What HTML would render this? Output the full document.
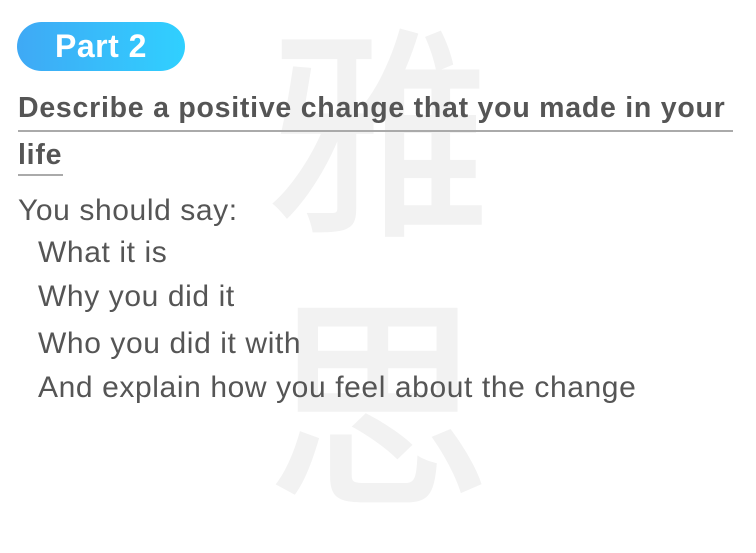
<!DOCTYPE html>
<html><head><meta charset="utf-8"><style>
html,body{margin:0;padding:0;background:#fff;}
body{width:756px;height:434px;position:relative;overflow:hidden;font-family:"Liberation Sans","Noto Sans CJK SC",sans-serif;color:#555;}
.wm{position:absolute;font-family:"Noto Sans CJK SC",sans-serif;color:#f2f2f2;font-size:225px;line-height:1;font-weight:500;}
.pill{position:absolute;left:17px;top:22px;width:168px;height:49px;border-radius:25px;background:linear-gradient(90deg,#3fa9f5,#30d0ff);color:#fff;font-weight:bold;font-size:32px;line-height:49px;text-align:center;letter-spacing:0.5px;}
.t{position:absolute;left:18px;font-weight:bold;font-size:28.5px;white-space:nowrap;letter-spacing:0.75px;}
.u{position:absolute;height:2px;background:#aaa;}
.l{position:absolute;font-size:30px;white-space:nowrap;line-height:1;letter-spacing:0.6px;}
</style></head><body>
<div class="wm" style="left:266px;top:8px;">雅</div>
<div class="wm" style="left:266px;top:278px;">思</div>
<div class="pill">Part 2</div>
<div class="t" style="top:92px;">Describe a positive change that you made in your</div>
<div class="u" style="left:18px;top:130px;width:715px;"></div>
<div class="t" style="top:139px;">life</div>
<div class="u" style="left:18px;top:174px;width:45px;"></div>
<div class="l" style="left:18px;top:196px;">You should say:</div>
<div class="l" style="left:38px;top:238px;">What it is</div>
<div class="l" style="left:38px;top:282px;">Why you did it</div>
<div class="l" style="left:38px;top:329px;">Who you did it with</div>
<div class="l" style="left:38px;top:373px;">And explain how you feel about the change</div>
</body></html>
